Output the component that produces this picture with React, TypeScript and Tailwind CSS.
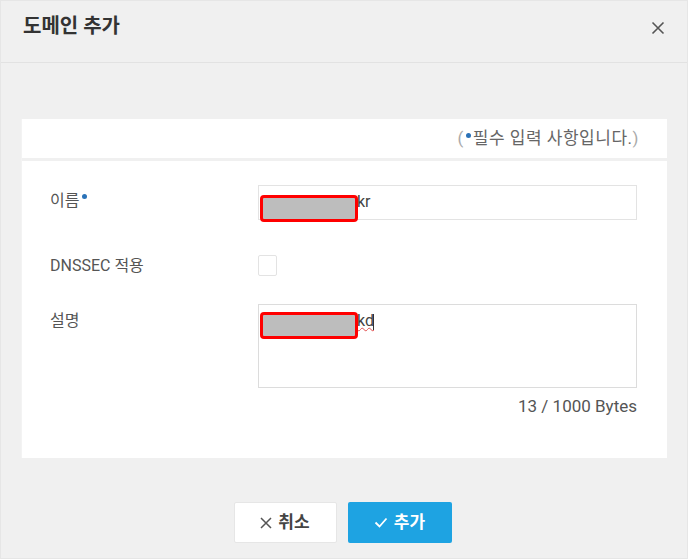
import React from "react";

function Redact({ top }: { top: number }) {
  return (
    <div
      className="absolute left-[1px] w-[98px] h-[27px] rounded-[4px] border-[3px] border-[#ff0000] bg-[#bdbdbd]"
      style={{ top }}
    />
  );
}

function Dot() {
  return <span className="inline-block w-[5px] h-[5px] rounded-full bg-[#2a72b8]" />;
}

export default function App() {
  return (
    <div
      className="w-[688px] h-[559px] bg-[#f0f0f0] border border-[#e6e6e6] flex flex-col text-[#444]"
      style={{ fontFamily: 'Roboto, "Noto Sans CJK KR", "Noto Sans", sans-serif' }}
    >
      <div className="h-[62px] flex items-start justify-between pl-[22px] pr-[22px] pt-[11px] border-b border-[#e2e2e2]">
        <div className="text-[20px] font-bold text-[#333] leading-[28px]">도메인 추가</div>
        <svg width="14" height="14" viewBox="0 0 14 14" className="mt-[9px]">
          <path d="M1.5 1.5 L12.5 12.5 M12.5 1.5 L1.5 12.5" stroke="#555" strokeWidth="1.6" />
        </svg>
      </div>
      <div className="px-[20px] pt-[56px]">
        <div className="bg-white h-[339px] border-l border-[#f3f3f3]">
          <div className="h-[42px] border-b-[3px] border-[#f0f0f0] flex items-center justify-end pr-[28px] text-[17px] tracking-[0.03em] text-[#666]">
            <span className="text-[#aaa]">(</span>
            <span className="mx-[2px] -mt-[6px] flex"><Dot /></span>
            <span>필수 입력 사항입니다.</span>
            <span className="text-[#aaa]">)</span>
          </div>
          <div className="pl-[28px] pr-[29px]">
            <div className="flex items-start mt-[24px]">
              <div className="w-[208px] pt-[6px] text-[16px] text-[#555] leading-[20px] flex items-start">
                이름<span className="ml-[3px] mt-[3px] flex"><Dot /></span>
              </div>
              <div className="relative w-[379px] h-[35px] border border-[#e3e3e3] text-[16px] text-[#444] pl-[98px] pt-[6px] leading-[20px]">
                kr
                <Redact top={9} />
              </div>
            </div>
            <div className="flex items-center mt-[35px]">
              <div className="w-[208px] text-[16px] text-[#555] leading-[20px]">DNSSEC 적용</div>
              <div className="w-[19px] h-[21px] border border-[#e3e3e3] rounded-[2px]" />
            </div>
            <div className="flex items-start mt-[28px]">
              <div className="w-[208px] pt-[7px] text-[16px] text-[#555] leading-[20px]">설명</div>
              <div className="flex flex-col items-end">
                <div className="relative w-[379px] h-[84px] border border-[#dcdcdc] text-[16px] text-[#444] pl-[98px] pt-[6px] leading-[20px]">
                  <span className="underline decoration-wavy decoration-[#e05050] decoration-1">kd</span>
                  <span className="inline-block w-[1px] h-[16px] bg-[#333] align-middle -ml-[1px]" />
                  <Redact top={7} />
                </div>
                <div className="mt-[8px] text-[17px] text-[#555] leading-[20px]">13 / 1000 Bytes</div>
              </div>
            </div>
          </div>
        </div>
      </div>
      <div className="flex justify-center gap-[11px] mt-[44px] pr-[3px]">
        <button className="w-[103px] h-[41px] bg-white border border-[#e6e6e6] rounded-[2px] flex items-center justify-center gap-[6px] text-[17px] font-bold text-[#444]">
          <svg width="12" height="12" viewBox="0 0 12 12">
            <path d="M1 1 L11 11 M11 1 L1 11" stroke="#555" strokeWidth="1.5" />
          </svg>
          취소
        </button>
        <button className="w-[104px] h-[41px] bg-[#1ea3e2] rounded-[2px] flex items-center justify-center gap-[6px] text-[17px] font-bold text-white">
          <svg width="14" height="11" viewBox="0 0 14 11">
            <path d="M1.5 5.5 L5.5 9.5 L12.5 1.5" stroke="#fff" strokeWidth="1.8" fill="none" />
          </svg>
          추가
        </button>
      </div>
    </div>
  );
}
